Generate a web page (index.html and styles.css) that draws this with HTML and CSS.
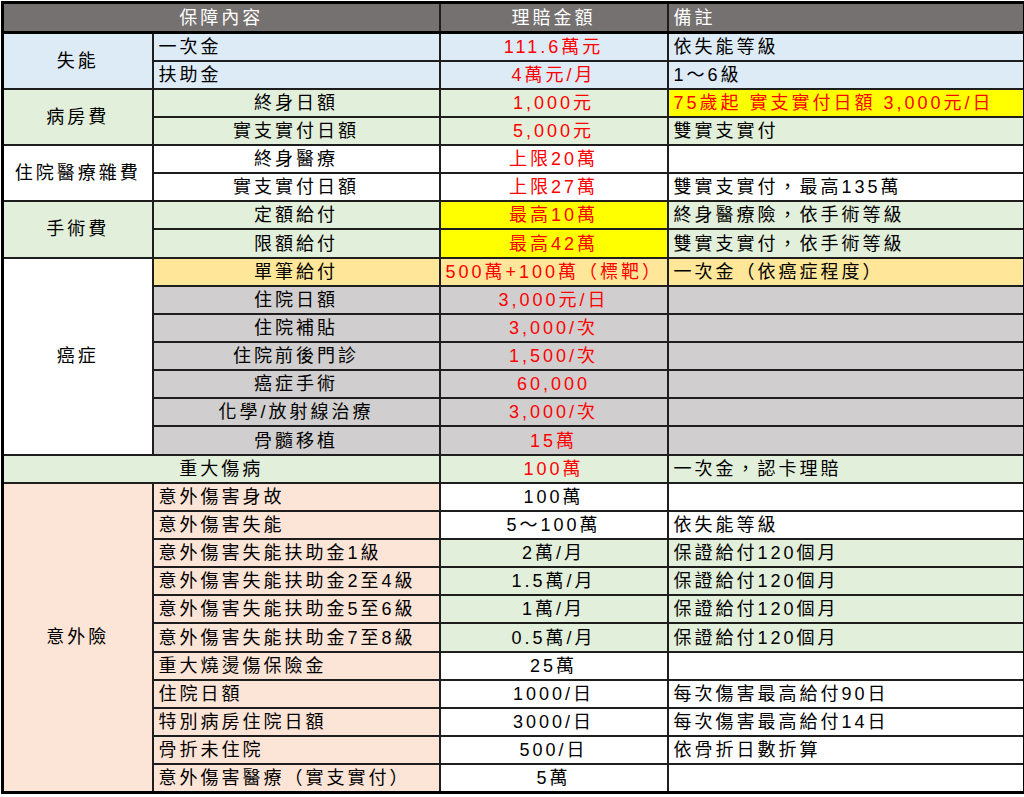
FILE: index.html
```html
<!DOCTYPE html>
<html lang="zh-Hant">
<head>
<meta charset="utf-8">
<title>保障內容</title>
<link rel="stylesheet" href="styles.css">
</head>
<body>
<table class="plan">
  <colgroup>
    <col class="w1"><col class="w2"><col class="w3"><col class="w4">
  </colgroup>
  <thead>
    <tr class="head">
      <th colspan="2">保障內容</th>
      <th>理賠金額</th>
      <th class="l">備註</th>
    </tr>
  </thead>
  <tbody>
    <tr>
      <td class="cat blue" rowspan="2">失能</td>
      <td class="blue l">一次金</td>
      <td class="blue red">111.6萬元</td>
      <td class="blue l">依失能等級</td>
    </tr>
    <tr>
      <td class="blue l">扶助金</td>
      <td class="blue red">4萬元/月</td>
      <td class="blue l">1～6級</td>
    </tr>
    <tr>
      <td class="cat green" rowspan="2">病房費</td>
      <td class="green">終身日額</td>
      <td class="green red">1,000元</td>
      <td class="yellow red l">75歲起 實支實付日額 3,000元/日</td>
    </tr>
    <tr>
      <td class="green">實支實付日額</td>
      <td class="green red">5,000元</td>
      <td class="green l">雙實支實付</td>
    </tr>
    <tr>
      <td class="cat white" rowspan="2">住院醫療雜費</td>
      <td class="white">終身醫療</td>
      <td class="white red">上限20萬</td>
      <td class="white l"></td>
    </tr>
    <tr>
      <td class="white">實支實付日額</td>
      <td class="white red">上限27萬</td>
      <td class="white l">雙實支實付，最高135萬</td>
    </tr>
    <tr>
      <td class="cat green" rowspan="2">手術費</td>
      <td class="green">定額給付</td>
      <td class="yellow red">最高10萬</td>
      <td class="green l">終身醫療險，依手術等級</td>
    </tr>
    <tr>
      <td class="green">限額給付</td>
      <td class="yellow red">最高42萬</td>
      <td class="green l">雙實支實付，依手術等級</td>
    </tr>
    <tr>
      <td class="cat white" rowspan="7">癌症</td>
      <td class="orange">單筆給付</td>
      <td class="orange red">500萬+100萬（標靶）</td>
      <td class="orange l">一次金（依癌症程度）</td>
    </tr>
    <tr>
      <td class="gray">住院日額</td>
      <td class="gray red">3,000元/日</td>
      <td class="gray l"></td>
    </tr>
    <tr>
      <td class="gray">住院補貼</td>
      <td class="gray red">3,000/次</td>
      <td class="gray l"></td>
    </tr>
    <tr>
      <td class="gray">住院前後門診</td>
      <td class="gray red">1,500/次</td>
      <td class="gray l"></td>
    </tr>
    <tr>
      <td class="gray">癌症手術</td>
      <td class="gray red">60,000</td>
      <td class="gray l"></td>
    </tr>
    <tr>
      <td class="gray">化學/放射線治療</td>
      <td class="gray red">3,000/次</td>
      <td class="gray l"></td>
    </tr>
    <tr>
      <td class="gray">骨髓移植</td>
      <td class="gray red">15萬</td>
      <td class="gray l"></td>
    </tr>
    <tr>
      <td class="green" colspan="2">重大傷病</td>
      <td class="green red">100萬</td>
      <td class="green l">一次金，認卡理賠</td>
    </tr>
    <tr>
      <td class="cat peach" rowspan="11">意外險</td>
      <td class="peach l">意外傷害身故</td>
      <td class="white">100萬</td>
      <td class="white l"></td>
    </tr>
    <tr>
      <td class="peach l">意外傷害失能</td>
      <td class="white">5～100萬</td>
      <td class="white l">依失能等級</td>
    </tr>
    <tr>
      <td class="peach l">意外傷害失能扶助金1級</td>
      <td class="green">2萬/月</td>
      <td class="green l">保證給付120個月</td>
    </tr>
    <tr>
      <td class="peach l">意外傷害失能扶助金2至4級</td>
      <td class="green">1.5萬/月</td>
      <td class="green l">保證給付120個月</td>
    </tr>
    <tr>
      <td class="peach l">意外傷害失能扶助金5至6級</td>
      <td class="green">1萬/月</td>
      <td class="green l">保證給付120個月</td>
    </tr>
    <tr>
      <td class="peach l">意外傷害失能扶助金7至8級</td>
      <td class="green">0.5萬/月</td>
      <td class="green l">保證給付120個月</td>
    </tr>
    <tr>
      <td class="peach l">重大燒燙傷保險金</td>
      <td class="white">25萬</td>
      <td class="white l"></td>
    </tr>
    <tr>
      <td class="peach l">住院日額</td>
      <td class="white">1000/日</td>
      <td class="white l">每次傷害最高給付90日</td>
    </tr>
    <tr>
      <td class="peach l">特別病房住院日額</td>
      <td class="white">3000/日</td>
      <td class="white l">每次傷害最高給付14日</td>
    </tr>
    <tr>
      <td class="peach l">骨折未住院</td>
      <td class="white">500/日</td>
      <td class="white l">依骨折日數折算</td>
    </tr>
    <tr>
      <td class="peach l">意外傷害醫療（實支實付）</td>
      <td class="white">5萬</td>
      <td class="white l"></td>
    </tr>
  </tbody>
</table>
</body>
</html>
```

FILE: styles.css
```css
html, body {
  margin: 0;
  padding: 0;
  background: #ffffff;
}

body {
  padding: 1px 0 0 1px;
  font-family: "Liberation Sans", "Noto Sans CJK TC", sans-serif;
  font-size: 18px;
  color: #000000;
}

.plan {
  width: 1022px;
  table-layout: fixed;
  border-collapse: collapse;
  border: 3px solid #000000;
}

.w1 { width: 150px; }
.w2 { width: 287px; }
.w3 { width: 228px; }
.w4 { width: 357px; }

.plan th,
.plan td {
  border: 2px solid #1e1e1e;
  padding: 0 5px;
  text-align: center;
  vertical-align: middle;
  letter-spacing: 3px;
  line-height: 22px;
  white-space: nowrap;
  overflow: hidden;
  font-weight: 400;
}

.head th {
  height: 27px;
  background: #767171;
  color: #ffffff;
  border-bottom: 3px solid #000000;
}

.plan tbody tr {
  height: 28.15px;
}

.plan .l {
  text-align: left;
}

.cat { letter-spacing: 4px; }

.blue { background: #ddebf7; }
.green { background: #e2efda; }
.yellow { background: #ffff00; }
.orange { background: #ffe699; }
.gray { background: #d0cece; }
.peach { background: #fce4d6; }
.white { background: #ffffff; }

.red { color: #ff0000; }
```
